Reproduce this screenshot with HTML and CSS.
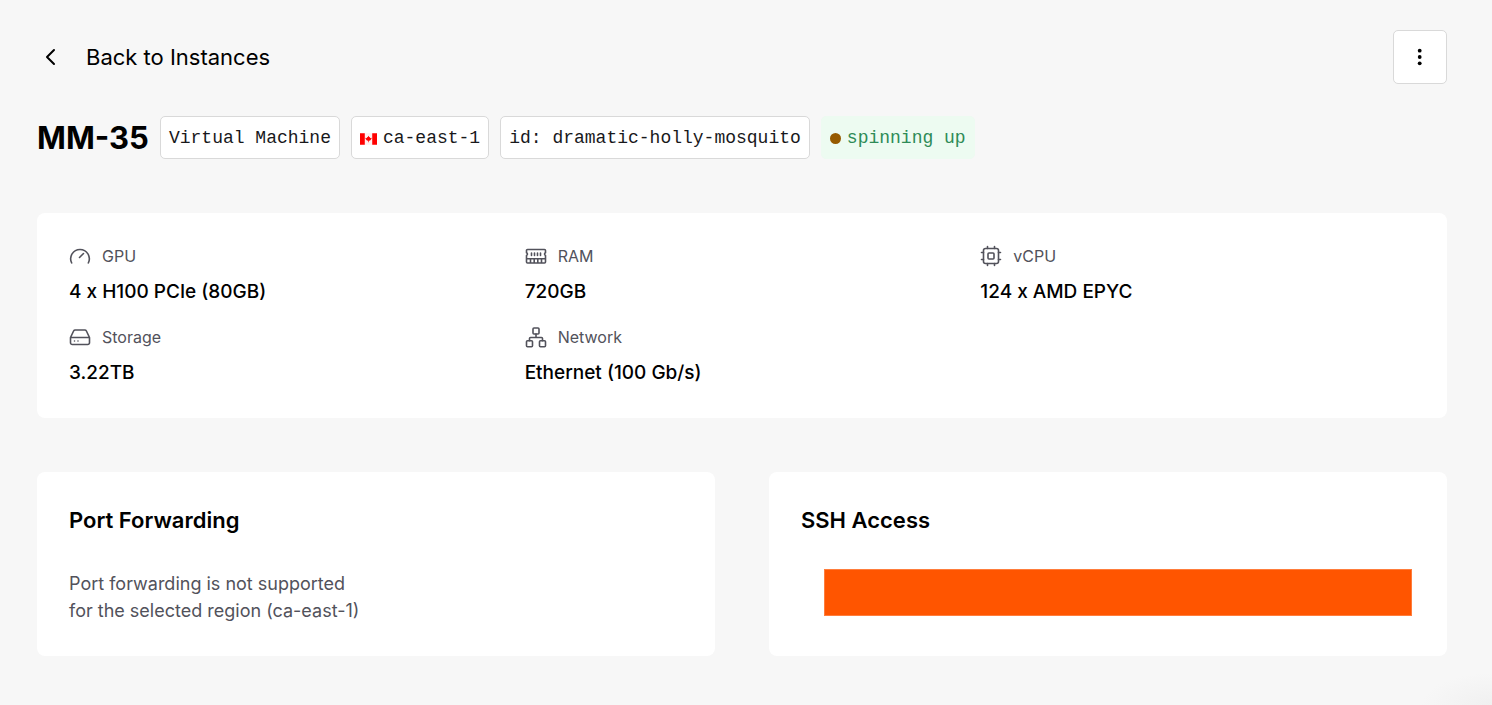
FILE: index.html
```html
<!DOCTYPE html>
<html lang="en">
<head>
<meta charset="utf-8">
<meta name="viewport" content="width=device-width, initial-scale=1">
<title>MM-35</title>
<link rel="stylesheet" href="styles.css">
</head>
<body>
<main class="page">
  <header class="topbar">
    <a class="back" href="#">
      <svg class="back-icon" viewBox="0 0 27 27" aria-hidden="true"><path d="M17 6L10 13L17 20"/></svg>
      <span>Back to Instances</span>
    </a>
    <button class="menu" type="button" aria-label="More actions">
      <svg class="menu-icon" viewBox="0 0 24 24" aria-hidden="true"><circle cx="11.700" cy="5.700" r="1.900"/><circle cx="11.700" cy="12" r="1.900"/><circle cx="11.700" cy="18.300" r="1.900"/></svg>
    </button>
  </header>

  <div class="heading">
    <h1 class="name">MM-35</h1>
    <span class="chip">Virtual Machine</span>
    <span class="chip">
      <svg class="flag" viewBox="0 0 16 11" aria-hidden="true"><path fill="#fff0f0" d="M0 0h16v11H0z"/><path fill="#f00" d="M0 0h4.500v11H0zM11.500 0h4.500v11h-4.500zM8 2.500l.8 1.300.7-.3-.1 1.200 1.300-.4.2 1L9.500 6.800 8.300 7.100V8.500h-.6V7.100L6.500 6.800 5.100 5.300l.2-1 1.300.4-.1-1.200.7.3z"/></svg>
      ca-east-1</span>
    <span class="chip">id: dramatic-holly-mosquito</span>
    <span class="chip chip-status"><i class="dot"></i>spinning up</span>
  </div>

  <section class="card">
    <dl class="specs">
      <div class="spec">
        <dt class="label"><svg class="icon" viewBox="0 0 22 22" aria-hidden="true"><path d="M2.700 18A9.300 9.300 0 1 1 19.300 18M10.500 12.500L14.500 8.500"/></svg>GPU</dt>
        <dd class="value">4 x H100 PCIe (80GB)</dd>
      </div>
      <div class="spec">
        <dt class="label"><svg class="icon" viewBox="0 0 22 22" aria-hidden="true"><path d="M2.500 4.500h17a1 1 0 0 1 1 1v2.200a1.500 1.500 0 0 0 0 2.800V17a1 1 0 0 1-1 1h-17a1 1 0 0 1-1-1v-6.500a1.500 1.500 0 0 0 0-2.800V5.500a1 1 0 0 1 1-1zM1.500 13.700h19M6.500 8v2.500M9.500 8v2.500M12.500 8v2.500M15.500 8v2.500M5.500 14v3.500M9.200 14v3.500M12.800 14v3.500M16.500 14v3.500"/></svg>RAM</dt>
        <dd class="value">720GB</dd>
      </div>
      <div class="spec">
        <dt class="label"><svg class="icon" viewBox="0 0 22 22" aria-hidden="true"><rect x="3.500" y="3.500" width="15" height="15" rx="2"/><rect x="8" y="8" width="6" height="6" rx="1"/><path d="M7.500 1.500v2M14.500 1.500v2M7.500 18.500v2M14.500 18.500v2M1.500 7.500h2M1.500 14.500h2M18.500 7.500h2M18.500 14.500h2"/></svg>vCPU</dt>
        <dd class="value">124 x AMD EPYC</dd>
      </div>
      <div class="spec">
        <dt class="label"><svg class="icon" viewBox="0 0 22 22" aria-hidden="true"><path d="M1.500 11.500L4.600 5A1.800 1.800 0 0 1 6.200 4h9.600a1.800 1.800 0 0 1 1.600 1L20.500 11.500v5.200a1.800 1.800 0 0 1-1.800 1.800H3.300a1.800 1.800 0 0 1-1.800-1.800zM1.500 11.500h19M5.500 15h.01M9 15h.01"/></svg>Storage</dt>
        <dd class="value">3.22TB</dd>
      </div>
      <div class="spec">
        <dt class="label"><svg class="icon" viewBox="0 0 22 22" aria-hidden="true"><rect x="8" y="2" width="6" height="6" rx="1"/><rect x="1.500" y="14.800" width="6" height="6" rx="1"/><rect x="14.500" y="14.800" width="6" height="6" rx="1"/><path d="M11 8v3.500M4.500 14.800V12.500a1 1 0 0 1 1-1h11a1 1 0 0 1 1 1v2.300"/></svg>Network</dt>
        <dd class="value">Ethernet (100 Gb/s)</dd>
      </div>
    </dl>
  </section>

  <div class="panels">
    <section class="card">
      <h2 class="card-title">Port Forwarding</h2>
      <p class="note">Port forwarding is not supported<br>for the selected region (ca-east-1)</p>
    </section>
    <section class="card">
      <h2 class="card-title">SSH Access</h2>
      <div class="redacted"></div>
    </section>
  </div>
</main>
</body>
</html>
```
FILE: styles.css
```css
* {
  box-sizing: border-box;
}

body {
  min-height: 100vh;
  margin: 0;
  background: radial-gradient(ellipse 70px 32px at 100% 100%, #f0f0f0, #f7f7f7) #f7f7f7;
  color: #000;
  font-family: Inter, "Liberation Sans", sans-serif;
}

.page {
  padding: 30px 45px 49px 37px;
}

.topbar {
  display: flex;
  align-items: center;
  justify-content: space-between;
}

.back {
  display: flex;
  align-items: center;
  gap: 22px;
  color: inherit;
  font-size: 22px;
  line-height: 32px;
  text-decoration: none;
}

.back-icon {
  width: 27px;
  height: 27px;
  fill: none;
  stroke: #000;
  stroke-width: 2;
  stroke-linecap: round;
  stroke-linejoin: round;
}

.menu {
  display: grid;
  place-items: center;
  width: 54px;
  height: 54px;
  padding: 0;
  border: 1px solid #d9d9d9;
  border-radius: 5px;
  background: #fff;
}

.menu-icon {
  width: 24px;
  height: 24px;
}

.heading {
  display: flex;
  flex-wrap: wrap;
  align-items: center;
  gap: 11px;
  margin-top: 32px;
}

.name {
  margin: 0;
  font-size: 31px;
  font-weight: 700;
  line-height: 43px;
}

.chip {
  display: flex;
  align-items: center;
  gap: 6px;
  padding: 8px 8px 6px;
  border: 1px solid #d9d9d9;
  border-radius: 5px;
  background: #fff;
  color: #18181b;
  font-family: "Liberation Mono", monospace;
  font-size: 18px;
  line-height: 27px;
}

.flag {
  width: 17px;
  height: 12px;
}

.chip-status {
  border-color: #edfbf1;
  background: #edfbf1;
  color: #2e8b57;
}

.dot {
  width: 11px;
  height: 11px;
  border-radius: 50%;
  background: #965a00;
}

.card {
  padding: 32px;
  border-radius: 8px;
  background: #fff;
}

.heading + .card {
  margin-top: 54px;
}

.specs {
  display: grid;
  grid-template-columns: repeat(3, 1fr);
  gap: 21px;
  margin: 0;
}

.label {
  display: flex;
  align-items: center;
  gap: 11px;
  color: #52525b;
  font-size: 16px;
  line-height: 22px;
}

.icon {
  width: 22px;
  height: 22px;
  fill: none;
  stroke: currentColor;
  stroke-width: 1.6;
  stroke-linecap: round;
  stroke-linejoin: round;
}

.value {
  margin: 11px 0 0;
  font-size: 19px;
  font-weight: 500;
  line-height: 27px;
}

.panels {
  display: grid;
  grid-template-columns: 1fr 1fr;
  gap: 54px;
  margin-top: 54px;
}

.card-title {
  margin: 0;
  font-size: 22px;
  font-weight: 600;
  line-height: 32px;
}

.note {
  margin: 34px 0 0;
  color: #52525b;
  font-size: 18px;
  line-height: 27px;
}

.redacted {
  height: 47px;
  margin: 33px 3px 0 23px;
  border: 1px solid #ff7d3c;
  background: #ff5500;
}
```
